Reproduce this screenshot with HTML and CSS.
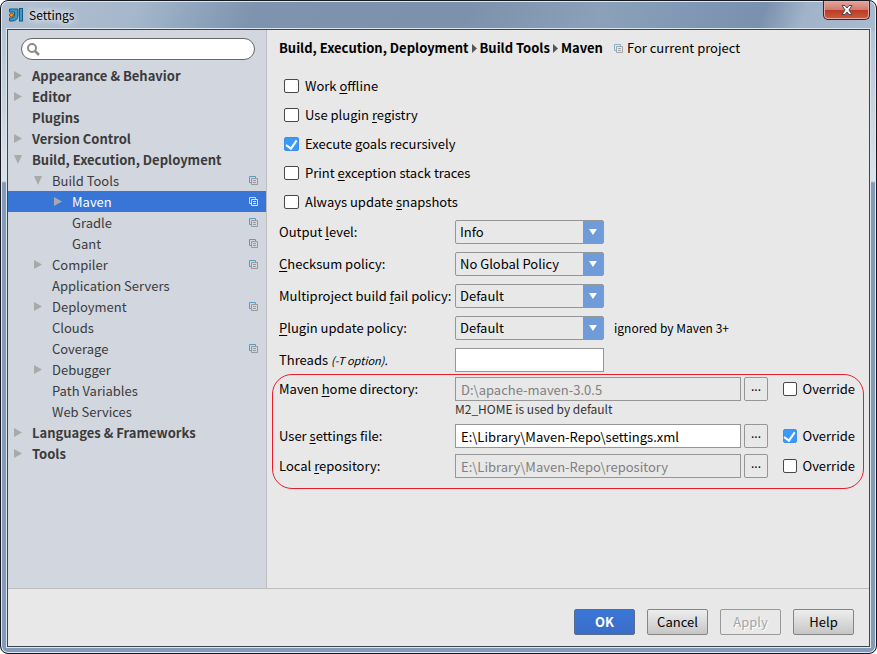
FILE: index.html
```html
<!DOCTYPE html>
<html lang="en">
<head>
<meta charset="utf-8">
<title>Settings</title>
<link rel="stylesheet" href="styles.css">
</head>
<body>
<svg class="defs" aria-hidden="true">
  <symbol id="copy" viewBox="0 0 9 9">
    <path d="M2 6.5H.5V.5H6.5V2" fill="none" stroke="var(--back, #5a9cc0)"/>
    <path d="M2.500 2.500H8.500V8.500H2.500ZM4 4.500H7M4 6.500H7" fill="none" stroke="var(--front, #999)"/>
  </symbol>
  <symbol id="right" viewBox="0 0 8 9" preserveAspectRatio="none"><path d="M0 0L8 4.500L0 9Z" fill="currentColor"/></symbol>
  <symbol id="down" viewBox="0 0 9 8" preserveAspectRatio="none"><path d="M0 0H9L4.500 8Z" fill="currentColor"/></symbol>
</svg>
<div class="window">
  <header class="titlebar">
    <svg class="logo" viewBox="0 0 14 14" aria-hidden="true">
      <path d="M.5 1H9V7Q9 13 3 13H.5V10H3Q5.500 10 5.500 7V4H.5Z" fill="#3a9bcb" stroke="#175b87"/>
      <rect x="10.500" y=".5" width="3" height="12.500" fill="#3a9bcb" stroke="#175b87"/>
      <circle cx="2.500" cy="7" r="2" fill="#f39a1c" stroke="#8c4b12"/>
    </svg>
    <h1 class="title">Settings</h1>
    <button class="close" type="button" aria-label="Close">
      <svg viewBox="0 0 12 10"><path d="M1 .5H4L6 3L8 .5H11L8 5L11 9.500H8L6 7L4 9.500H1L4 5Z" fill="#f5f5f5" stroke="#454a58"/></svg>
    </button>
  </header>
  <div class="client">
    <div class="body">
      <nav class="sidebar" aria-label="Settings sections">
        <div class="search">
          <svg viewBox="0 0 13 13" aria-hidden="true"><circle cx="5" cy="5" r="4" fill="none" stroke="#8c8c8c" stroke-width="2"/><path d="M8 8L12 12" stroke="#8c8c8c" stroke-width="2.500"/></svg>
          <input type="search" aria-label="Search settings">
        </div>
        <ul class="tree">
          <li><a class="node top" href="#"><svg class="arrow"><use href="#right"/></svg>Appearance &amp; Behavior</a></li>
          <li><a class="node top" href="#"><svg class="arrow"><use href="#right"/></svg>Editor</a></li>
          <li><a class="node top" href="#"><span class="arrow"></span>Plugins</a></li>
          <li><a class="node top" href="#"><svg class="arrow"><use href="#right"/></svg>Version Control</a></li>
          <li><a class="node top" href="#"><svg class="arrow"><use href="#down"/></svg>Build, Execution, Deployment</a>
            <ul>
              <li><a class="node second" href="#"><svg class="arrow"><use href="#down"/></svg>Build Tools<svg class="scope"><use href="#copy"/></svg></a>
                <ul>
                  <li><a class="node third selected" href="#" aria-current="page"><svg class="arrow"><use href="#right"/></svg>Maven<svg class="scope"><use href="#copy"/></svg></a></li>
                  <li><a class="node third" href="#"><span class="arrow"></span>Gradle<svg class="scope"><use href="#copy"/></svg></a></li>
                  <li><a class="node third" href="#"><span class="arrow"></span>Gant<svg class="scope"><use href="#copy"/></svg></a></li>
                </ul>
              </li>
              <li><a class="node second" href="#"><svg class="arrow"><use href="#right"/></svg>Compiler<svg class="scope"><use href="#copy"/></svg></a></li>
              <li><a class="node second" href="#"><span class="arrow"></span>Application Servers</a></li>
              <li><a class="node second" href="#"><svg class="arrow"><use href="#right"/></svg>Deployment<svg class="scope"><use href="#copy"/></svg></a></li>
              <li><a class="node second" href="#"><span class="arrow"></span>Clouds</a></li>
              <li><a class="node second" href="#"><span class="arrow"></span>Coverage<svg class="scope"><use href="#copy"/></svg></a></li>
              <li><a class="node second" href="#"><svg class="arrow"><use href="#right"/></svg>Debugger</a></li>
              <li><a class="node second" href="#"><span class="arrow"></span>Path Variables</a></li>
              <li><a class="node second" href="#"><span class="arrow"></span>Web Services</a></li>
            </ul>
          </li>
          <li><a class="node top" href="#"><svg class="arrow"><use href="#right"/></svg>Languages &amp; Frameworks</a></li>
          <li><a class="node top" href="#"><svg class="arrow"><use href="#right"/></svg>Tools</a></li>
        </ul>
      </nav>
      <main class="panel">
        <div class="crumbs">
          <h2>Build, Execution, Deployment<svg class="sep"><use href="#right"/></svg>Build Tools<svg class="sep"><use href="#right"/></svg>Maven</h2>
          <svg class="scope"><use href="#copy"/></svg><span>For current project</span>
        </div>
        <div class="checks">
          <label class="check"><input type="checkbox"><span>Work <u>o</u>ffline</span></label>
          <label class="check"><input type="checkbox"><span>Use plugin <u>r</u>egistry</span></label>
          <label class="check"><input type="checkbox" checked><span>Execute <u>g</u>oals recursively</span></label>
          <label class="check"><input type="checkbox"><span>Print <u>e</u>xception stack traces</span></label>
          <label class="check"><input type="checkbox"><span>Always update <u>s</u>napshots</span></label>
        </div>
        <div class="fields">
          <div class="row"><label for="level">Output <u>l</u>evel:</label><div class="combo"><select id="level"><option>Info</option></select><span class="drop"><svg><use href="#down"/></svg></span></div></div>
          <div class="row"><label for="checksum"><u>C</u>hecksum policy:</label><div class="combo"><select id="checksum"><option>No Global Policy</option></select><span class="drop"><svg><use href="#down"/></svg></span></div></div>
          <div class="row"><label for="fail">Multiproject build <u>f</u>ail policy:</label><div class="combo"><select id="fail"><option>Default</option></select><span class="drop"><svg><use href="#down"/></svg></span></div></div>
          <div class="row"><label for="update"><u>P</u>lugin update policy:</label><div class="combo"><select id="update"><option>Default</option></select><span class="drop"><svg><use href="#down"/></svg></span></div><span class="note">ignored by Maven 3+</span></div>
          <div class="row"><label for="threads">Threads <em>(-T option).</em></label><input class="text short" id="threads" type="text"></div>
        </div>
        <section class="paths">
          <div class="row"><label for="home">Maven <u>h</u>ome directory:</label><input class="text" id="home" type="text" value="D:\apache-maven-3.0.5" disabled><button class="browse" type="button" aria-label="Browse">...</button><label class="check override"><input type="checkbox"><span>Override</span></label></div>
          <p class="hint">M2_HOME is used by default</p>
          <div class="row"><label for="user">User <u>s</u>ettings file:</label><input class="text" id="user" type="text" value="E:\Library\Maven-Repo\settings.xml"><button class="browse" type="button" aria-label="Browse">...</button><label class="check override"><input type="checkbox" checked><span>Override</span></label></div>
          <div class="row last"><label for="repo">Local <u>r</u>epository:</label><input class="text" id="repo" type="text" value="E:\Library\Maven-Repo\repository" disabled><button class="browse" type="button" aria-label="Browse">...</button><label class="check override"><input type="checkbox"><span>Override</span></label></div>
        </section>
      </main>
    </div>
    <footer class="actions">
      <button class="btn primary" type="button">OK</button>
      <button class="btn" type="button">Cancel</button>
      <button class="btn" type="button" disabled>Apply</button>
      <button class="btn" type="button">Help</button>
    </footer>
  </div>
</div>
</body>
</html>
```
FILE: styles.css
```css
* { box-sizing: border-box; }
body {
  margin: 0;
  background: #fff;
  color: #000;
  font: 13px/20px "Noto Sans CJK SC", "Open Sans", sans-serif;
}
input, select, button { font: inherit; color: inherit; }
ul { list-style: none; margin: 0; padding: 0; }
u { text-underline-offset: 2px; text-decoration-thickness: 1px; }
svg { flex: none; }
.defs { position: absolute; width: 0; height: 0; }

.window {
  min-height: 100vh;
  display: flex;
  flex-direction: column;
  padding: 0 6px 6px;
  border: 1px solid #16191f;
  border-radius: 8px;
  box-shadow: inset 0 0 0 1px #dfe8f2;
  background:
    linear-gradient(110deg, #b3c1d2 0, #a5b7cb 130px, #8ea4bd 190px, #7e94ae 240px, #7c92ac 440px, #8ba1ba 570px, #8098b4 650px, #7a91ad 720px, #a0b3c9 760px, #a9bbce 100%) 0 0 / 100% 30px no-repeat,
    linear-gradient(#aebdcf 0, #dbe2ea 180px, #849bb7 182px, #849bb7 100%);
}
.titlebar { display: flex; align-items: center; height: 28px; padding-left: 2px; }
.logo { width: 14px; height: 14px; }
.title {
  flex: 1;
  margin: 0 0 0 6px;
  font-size: 12px;
  font-weight: 400;
  text-shadow: 0 0 6px #fff, 0 0 10px #fff;
}
.close {
  align-self: flex-start;
  width: 47px;
  height: 19px;
  padding: 0;
  display: flex;
  align-items: center;
  justify-content: center;
  border: 1px solid #40222a;
  border-top: 0;
  border-radius: 0 0 5px 5px;
  box-shadow: inset 0 0 0 1px #e4aaa4;
  background: linear-gradient(#e3a69c 0, #d17b6d 48%, #b93a25 50%, #cf5c3c 100%);
}
.close svg { width: 12px; height: 10px; }

.client {
  flex: 1;
  display: flex;
  flex-direction: column;
  border: 1px solid #3c454e;
  box-shadow: 0 0 0 1px #dce6ee;
  background: #e8e8e8;
}
.body { flex: 1; display: flex; border-bottom: 1px solid #bdbdbd; }

.sidebar {
  width: 31%;
  max-width: 259px;
  flex-shrink: 0;
  padding-top: 8px;
  border-right: 1px solid #bdbdbd;
  background: #d2d6de;
}
.search {
  display: flex;
  align-items: center;
  height: 22px;
  margin: 0 11px 5px 13px;
  padding: 0 5px;
  border: 1px solid #666;
  border-radius: 11px;
  background: #fff;
}
.search svg { width: 13px; height: 13px; }
.search input { flex: 1; min-width: 0; height: 18px; border: 0; outline: 0; background: none; appearance: none; }
.node {
  display: flex;
  align-items: center;
  height: 21px;
  padding: 0 8px 0 6px;
  color: #3b3b3b;
  text-decoration: none;
}
.top { font-weight: 700; }
.second { padding-left: 26px; }
.third { padding-left: 46px; }
.arrow { width: 8px; height: 9px; margin-right: 10px; color: #a9a9a9; }
.scope { width: 9px; height: 9px; }
.node .scope { margin-left: auto; }
.selected { background: #3875d7; color: #fff; --back: #c5dcfa; --front: #dbe8fc; }

.panel { flex: 1; min-width: 0; padding-top: 8px; }
.crumbs { display: flex; align-items: center; padding-left: 12px; --back: #7db4d4; --front: #a5a5a5; }
.crumbs h2 { margin: 0 11px 0 0; font-size: 13px; line-height: 20px; }
.crumbs span { margin-left: 4px; }
.sep { width: 5px; height: 9px; margin: 0 3px; color: #555; }
.checks { display: grid; gap: 9px; padding: 18px 17px 0; justify-items: start; }
.check { display: flex; align-items: center; gap: 6px; }
.check input {
  appearance: none;
  width: 15px;
  height: 14px;
  margin: 0;
  border: 1px solid #484848;
  border-radius: 2px;
  background: #fff;
  display: grid;
  place-items: center;
}
.check input:checked { background: #3b99fc; border-color: #3b8fea; }
.check input:checked::before {
  content: "";
  width: 5px;
  height: 9px;
  margin-bottom: 2px;
  border: solid #fff;
  border-width: 0 2px 2px 0;
  transform: rotate(35deg);
}

.fields { display: grid; gap: 8px; padding: 8px 12px 2px; }
.row { display: flex; align-items: center; height: 24px; }
.row > label:first-child { width: 176px; flex: none; }
em { font-size: 11px; }
.combo { position: relative; width: 149px; height: 24px; }
.combo select {
  appearance: none;
  width: 100%;
  height: 24px;
  padding: 0 24px 0 4px;
  border: 1px solid #969696;
  border-radius: 2px;
  background: #e8e8e8;
}
.drop {
  position: absolute;
  top: 1px;
  right: 1px;
  width: 20px;
  height: 22px;
  display: flex;
  align-items: center;
  justify-content: center;
  background: #6f9bd8;
  color: #fff;
  pointer-events: none;
}
.drop svg { width: 8px; height: 6px; }
.note { margin-left: 10px; font-size: 12px; }
.text {
  flex: 1;
  min-width: 0;
  height: 24px;
  padding: 0 5px;
  border: 1px solid #969696;
  background: #fff;
}
.text.short { flex: none; width: 149px; }
.text:disabled { background: #e8e8e8; color: #808080; }
.paths { margin: 0 5px; padding: 2px 8px 10px 6px; border: 1px solid #e81c2a; border-radius: 20px; }
.browse {
  width: 24px;
  height: 24px;
  margin: 0 15px 0 3px;
  padding: 0 0 6px;
  border: 1px solid #969696;
  border-radius: 2px;
  background: #e8e8e8;
  font-size: 12px;
  line-height: 16px;
}
.override { width: 72px; }
.hint { margin: 0 0 7px 176px; font-size: 12px; line-height: 16px; color: #333; }
.paths .last { margin-top: 6px; }

.actions { display: flex; justify-content: flex-end; gap: 12px; padding: 20px 15px 11px; }
.btn {
  width: 61px;
  height: 26px;
  padding: 0;
  border: 1px solid #858585;
  border-radius: 2px;
  background: linear-gradient(#eee, #c6c6c6);
}
.primary { border-color: #5a6d8c; background: linear-gradient(#3b76d6, #3a6dc9); color: #fff; font-weight: 700; }
.btn:disabled { background: #e8e8e8; border-color: #999; color: #a5a5a5; text-shadow: 1px 1px #fff; }
```
